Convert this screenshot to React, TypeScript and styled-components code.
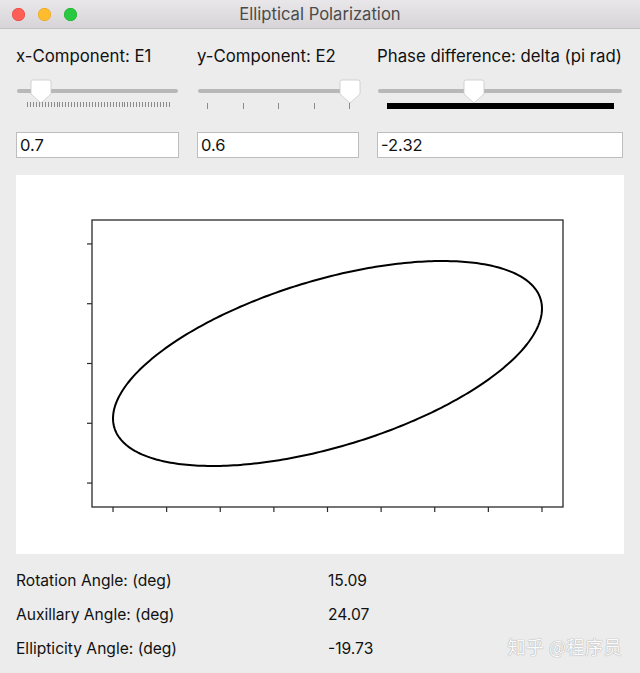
import React from "react";
import styled, { createGlobalStyle } from "styled-components";

const Global = createGlobalStyle`
  html, body { margin: 0; padding: 0; background: #ececec; }
  body { width: 640px; height: 673px; overflow: hidden; font-family: Inter, "Noto Sans", "Liberation Sans", sans-serif; }
`;

const Window = styled.div`
  width: 640px;
  height: 673px;
  background: #ececec;
  display: flex;
  flex-direction: column;
  position: relative;
  overflow: hidden;
`;

const TitleBar = styled.div`
  height: 28px;
  flex: none;
  background: linear-gradient(#e9e7e9, #d6d4d6);
  border-bottom: 1px solid #c4c2c4;
  display: flex;
  align-items: center;
  position: relative;
`;

const Lights = styled.div`
  display: flex;
  gap: 13px;
  padding-left: 12px;
`;

const Light = styled.span<{ $c: string; $b: string }>`
  width: 13px;
  height: 13px;
  border-radius: 50%;
  background: ${(p) => p.$c};
  box-shadow: inset 0 0 0 0.5px ${(p) => p.$b};
`;

const Title = styled.div`
  position: absolute;
  left: 0;
  right: 0;
  top: 0;
  bottom: 0;
  display: flex;
  align-items: center;
  justify-content: center;
  font-size: 16.6px;
  color: #4b4b4b;
  pointer-events: none;
`;

const Content = styled.div`
  padding: 17px 16px 0 16px;
  display: flex;
  flex-direction: column;
`;

const Controls = styled.div`
  display: grid;
  grid-template-columns: 163px 162px 246px;
  column-gap: 18px;
`;

const Column = styled.div`
  display: flex;
  flex-direction: column;
`;

const Label = styled.div`
  font-size: 16.8px;
  line-height: 20px;
  height: 20px;
  color: #111;
  white-space: nowrap;
`;

const SliderArea = styled.div`
  height: 66px;
  padding: 23px 1px 0 1px;
  box-sizing: border-box;
`;

const Track = styled.div`
  position: relative;
  height: 4px;
  border-radius: 2px;
  background: #b8b8b8;
`;

const ThumbSvg = styled.svg`
  position: absolute;
  top: -10px;
  width: 22px;
  height: 26px;
  overflow: visible;
`;

const TickRow = styled.div<{ $l: number; $r: number; $t: number; $h: number }>`
  margin: ${(p) => p.$t}px ${(p) => p.$r}px 0 ${(p) => p.$l}px;
  height: ${(p) => p.$h}px;
  display: flex;
  justify-content: space-between;
`;

const Tick = styled.span`
  width: 1px;
  height: 100%;
  background: #8a8a8a;
`;

const Bar = styled.div<{ $l: number; $r: number }>`
  margin: 10px ${(p) => p.$r}px 0 ${(p) => p.$l}px;
  height: 6px;
  background: #000;
`;

const Field = styled.input`
  box-sizing: border-box;
  height: 26px;
  width: 100%;
  margin: 0;
  border: 1px solid #bdbdbd;
  background: #fff;
  font: inherit;
  font-size: 16.5px;
  color: #111;
  padding: 0 3px;
  outline: none;
`;

const PlotPanel = styled.div`
  margin-top: 17px;
  width: 608px;
  height: 379px;
  background: #fff;
`;

const Results = styled.div`
  margin-top: 9px;
  display: grid;
  grid-template-columns: 312px auto;
  grid-auto-rows: 34px;
  align-items: center;
  font-size: 15.6px;
  color: #111;
`;

const Watermark = styled.div`
  position: absolute;
  right: 18px;
  bottom: 14px;
  font-family: "Noto Sans CJK SC", sans-serif;
  font-size: 18px;
  color: #fafafa;
  text-shadow: 0 0 1px #a8a8a8, 0 0 1px #a8a8a8;
  letter-spacing: 0.5px;
`;

const Thumb = ({ left }: { left: number }) => (
  <ThumbSvg style={{ left }} viewBox="0 0 22 26">
    <path
      d="M3 1 H19 Q21 1 21 3 V15 L11 24 L1 15 V3 Q1 1 3 1 Z"
      fill="#fff"
      stroke="#c9c9c9"
      strokeWidth="0.8"
    />
  </ThumbSvg>
);

const range = (n: number) => Array.from({ length: n }, (_, i) => i);

const Plot = () => {
  const cx = 311.5;
  const cy = 188.5;
  const sx = 306.4;
  const sy = 170.8;
  const d = -2.32 * Math.PI;
  const pts: string[] = [];
  for (let i = 0; i <= 360; i++) {
    const t = (i / 360) * Math.PI * 2;
    const x = cx + sx * 0.7 * Math.cos(t);
    const y = cy - sy * 0.6 * Math.cos(t + d);
    pts.push(`${x.toFixed(2)},${y.toFixed(2)}`);
  }
  const xt = range(9).map((k) => cx + (-0.7 + 0.175 * k) * sx);
  const yt = range(5).map((k) => cy + (-0.7 + 0.35 * k) * sy);
  return (
    <svg width="608" height="379" viewBox="0 0 608 379">
      <rect x="76" y="45" width="471" height="287" fill="none" stroke="#2a2a2a" strokeWidth="1.3" />
      {xt.map((x, i) => (
        <line key={i} x1={x} x2={x} y1={332} y2={337} stroke="#2a2a2a" strokeWidth="1.2" />
      ))}
      {yt.map((y, i) => (
        <line key={i} x1={71} x2={76} y1={y} y2={y} stroke="#2a2a2a" strokeWidth="1.2" />
      ))}
      <polyline points={pts.join(" ")} fill="none" stroke="#000" strokeWidth="2" />
    </svg>
  );
};

export default function App() {
  return (
    <>
      <Global />
      <Window>
        <TitleBar>
          <Lights>
            <Light $c="#fe5f57" $b="#e0443e" />
            <Light $c="#febc2e" $b="#dea123" />
            <Light $c="#28c840" $b="#1aab29" />
          </Lights>
          <Title>Elliptical Polarization</Title>
        </TitleBar>
        <Content>
          <Controls>
            <Column>
              <Label>x-Component: E1</Label>
              <SliderArea>
                <Track>
                  <Thumb left={13} />
                </Track>
                <TickRow $l={10} $r={8} $t={9} $h={5}>
                  {range(49).map((i) => (
                    <Tick key={i} />
                  ))}
                </TickRow>
              </SliderArea>
              <Field defaultValue="0.7" />
            </Column>
            <Column>
              <Label>y-Component: E2</Label>
              <SliderArea>
                <Track>
                  <Thumb left={141} />
                </Track>
                <TickRow $l={9} $r={8} $t={10} $h={6}>
                  {range(5).map((i) => (
                    <Tick key={i} />
                  ))}
                </TickRow>
              </SliderArea>
              <Field defaultValue="0.6" />
            </Column>
            <Column>
              <Label>Phase difference: delta (pi rad)</Label>
              <SliderArea>
                <Track>
                  <Thumb left={85} />
                </Track>
                <Bar $l={9} $r={8} />
              </SliderArea>
              <Field defaultValue="-2.32" />
            </Column>
          </Controls>
          <PlotPanel>
            <Plot />
          </PlotPanel>
          <Results>
            <span>Rotation Angle: (deg)</span>
            <span>15.09</span>
            <span>Auxillary Angle: (deg)</span>
            <span>24.07</span>
            <span>Ellipticity Angle: (deg)</span>
            <span>-19.73</span>
          </Results>
        </Content>
        <Watermark>知乎 @程序员</Watermark>
      </Window>
    </>
  );
}
